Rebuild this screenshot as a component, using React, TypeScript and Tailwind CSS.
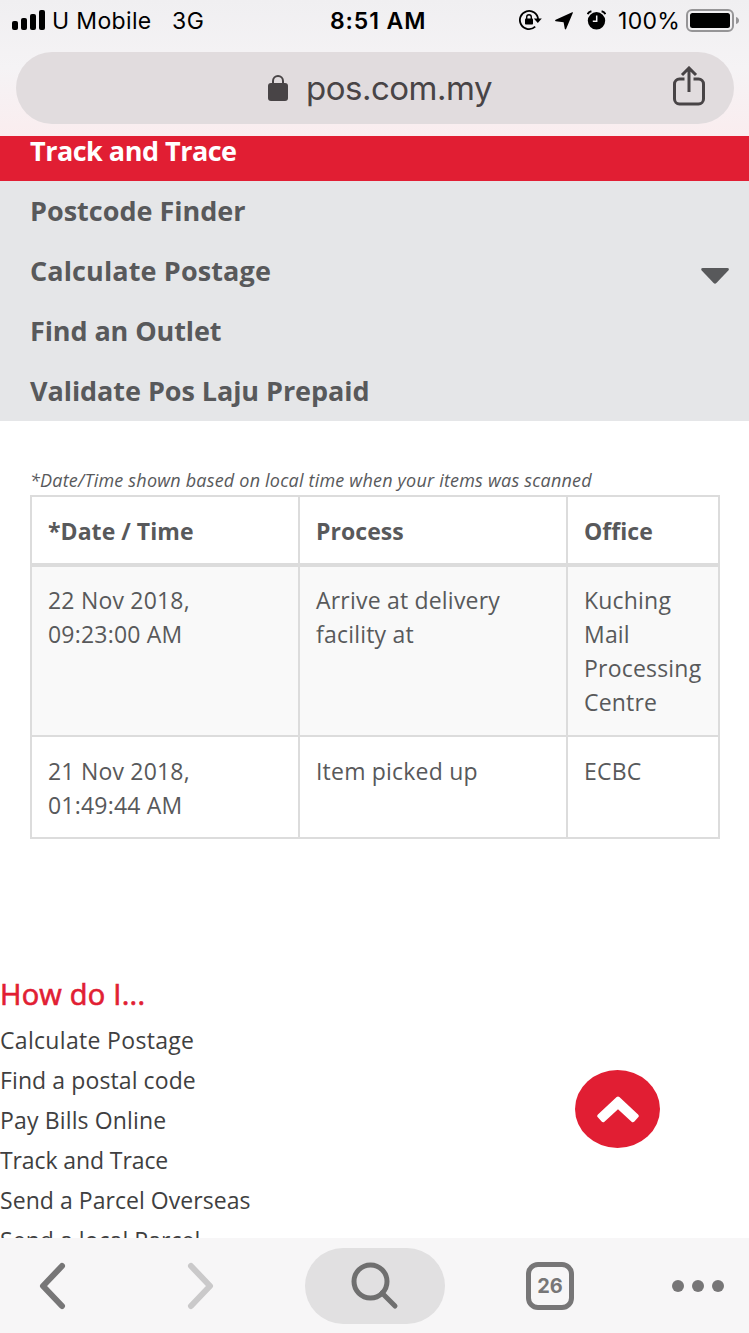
const menuItems = [
  { label: "Postcode Finder", tracking: "tracking-normal", expandable: false },
  { label: "Calculate Postage", tracking: "tracking-[0.12px]", expandable: true },
  { label: "Find an Outlet", tracking: "tracking-[-0.1px]", expandable: false },
  { label: "Validate Pos Laju Prepaid", tracking: "tracking-[-0.06px]", expandable: false },
];

const helpLinks = [
  { label: "Calculate Postage", tracking: "tracking-[0.32px]" },
  { label: "Find a postal code", tracking: "tracking-[0.1px]" },
  { label: "Pay Bills Online", tracking: "tracking-[0.15px]" },
  { label: "Track and Trace", tracking: "tracking-[-0.1px]" },
  { label: "Send a Parcel Overseas", tracking: "tracking-[0.05px]" },
  { label: "Send a local Parcel", tracking: "tracking-[0.05px]" },
];

const StatusBar = () => (
  <div className="flex h-[42px] items-center text-[23px] text-black">
    <svg className="mb-0.5 ml-3 h-5 w-[33px] shrink-0" viewBox="0 0 33 20">
      <rect x="0" y="11" width="6" height="9" rx="2" />
      <rect x="9" y="8" width="6" height="12" rx="2" />
      <rect x="18" y="4" width="6" height="16" rx="2" />
      <rect x="27" y="0" width="6" height="20" rx="2" />
    </svg>
    <span className="ml-[7px] w-[120px] whitespace-nowrap tracking-[0.35px]">U Mobile</span>
    <span className="w-[158px] tracking-[0.5px]">3G</span>
    <span className="w-[189px] whitespace-nowrap font-semibold tracking-[0.9px]">8:51 AM</span>
    <svg className="mb-0.5 h-[22px] w-[24px] shrink-0" viewBox="0 0 24 22">
      <path
        d="M16.200 17.700A9.100 9.100 0 1 1 19.100 10.500"
        fill="none"
        stroke="black"
        strokeWidth="1.800"
      />
      <path d="M14.800 9.600h8l-4 4.500z" />
      <rect x="6" y="9.500" width="8" height="6" rx="0.800" />
      <path d="M7.700 10V8a2.300 2.300 0 0 1 4.600 0v2" fill="none" stroke="black" strokeWidth="1.400" />
    </svg>
    <svg className="mb-px ml-3 h-[18px] w-[18px] shrink-0" viewBox="0 0 18 18">
      <path d="M17.200.3Q18.300 0 17.800 1.100L11.200 16.800q-.8 1.400-1.400-.1L8.600 10.200.8 9.300Q-.6 8.600.7 7.700Z" />
    </svg>
    <svg className="mb-0.5 ml-3.5 h-5 w-[19px] shrink-0" viewBox="0 0 19 20">
      <circle cx="9.500" cy="10.800" r="8.700" />
      <path d="M9.700 5.500v5.800H5.800" fill="none" stroke="#f2f1f3" strokeWidth="1.500" />
      <path d="M.8 4.200Q1.300 1.900 4.400 1.200M18.200 4.200Q17.700 1.900 14.600 1.200" fill="none" stroke="black" strokeWidth="2" />
    </svg>
    <span className="ml-3 w-[68px] whitespace-nowrap tracking-[0.3px]">100%</span>
    <svg className="h-6 w-[54px] shrink-0" viewBox="0 0 54 24">
      <rect x="1" y="1" width="46" height="21" rx="5" fill="none" stroke="#969597" strokeWidth="2" />
      <rect x="4" y="4" width="40" height="15" rx="2.500" />
      <path d="M50 8q3 1 3 3.500t-3 3.500z" fill="#969597" />
    </svg>
  </div>
);

const AddressBar = () => (
  <div className="mt-2.5 mr-[15px] ml-4 flex h-[72px] items-center rounded-full bg-[#e1dcde] text-[#484446]">
    <svg className="ml-[252px] h-[26px] w-5 shrink-0" viewBox="0 0 20 26">
      <rect x="0" y="8" width="20" height="18" rx="3" fill="currentColor" />
      <path d="M5 9V6a5 5 0 0 1 10 0v3" fill="none" stroke="currentColor" strokeWidth="2" />
    </svg>
    <span className="mt-0.5 ml-[18px] w-[367px] text-[33px] tracking-[-0.5px]">pos.com.my</span>
    <svg className="mb-1 h-10 w-8 shrink-0" viewBox="0 0 32 40" fill="none" stroke="currentColor" strokeWidth="3">
      <path d="M11.500 13H6.500a5 5 0 0 0-5 5v15a5 5 0 0 0 5 5h19a5 5 0 0 0 5-5V18a5 5 0 0 0-5-5h-5" />
      <path d="M16 26V2.500M9 9l7-7 7 7" />
    </svg>
  </div>
);

const SiteMenu = () => (
  <nav className="text-[27px] font-bold text-[#58595b]">
    <div className="flex h-[45px] items-start bg-[#e11e33] px-[30px] text-white">
      <span className="leading-[30px] tracking-[-0.5px]">Track and Trace</span>
    </div>
    <div className="bg-[#e5e6e8]">
      {menuItems.map((item) => (
        <div key={item.label} className="flex h-[60px] items-center justify-between pr-5 pl-[30px]">
          <span className={item.tracking}>{item.label}</span>
          {item.expandable && (
            <svg className="mt-2.5 h-4 w-[28px]" viewBox="0 0 28 16">
              <path d="M1.500 0h25q2.500.5.8 2.400L15.400 15q-1.400 1.400-2.800 0L.7 2.400Q-.8.500 1.500 0Z" fill="#58595b" />
            </svg>
          )}
        </div>
      ))}
    </div>
  </nav>
);

const TrackingTable = () => (
  <section className="px-[30px] pt-[47px] text-[#58595b]">
    <p className="h-[27px] whitespace-nowrap text-[18px] leading-[24px] tracking-[0.2px] italic">
      *Date/Time shown based on local time when your items was scanned
    </p>
    <table className="w-[690px] table-fixed border-separate border-spacing-0 border-t-2 border-l-2 border-[#dcdcdc] text-left text-[23px] leading-[34px] tracking-[0.2px]">
      <colgroup>
        <col className="w-[268px]" />
        <col className="w-[268px]" />
        <col className="w-[152px]" />
      </colgroup>
      <thead className="tracking-[0.05px]">
        <tr>
          {["*Date / Time", "Process", "Office"].map((heading) => (
            <th
              key={heading}
              className="border-r-2 border-b-4 border-[#dcdcdc] px-4 pt-[17px] pb-[15px] font-bold"
            >
              {heading}
            </th>
          ))}
        </tr>
      </thead>
      <tbody className="align-top">
        <tr className="h-[170px] bg-[#f9f9f9]">
          <Cell lines={["22 Nov 2018,", "09:23:00 AM"]} />
          <Cell lines={["Arrive at delivery", "facility at"]} />
          <Cell lines={["Kuching", "Mail", "Processing", "Centre"]} />
        </tr>
        <tr className="h-[102px]">
          <Cell lines={["21 Nov 2018,", "01:49:44 AM"]} className="pt-[17px]" />
          <Cell lines={["Item picked up"]} className="pt-[17px]" />
          <Cell lines={["ECBC"]} className="pt-[17px]" />
        </tr>
      </tbody>
    </table>
  </section>
);

const Cell = ({ lines, className = "pt-4" }: { lines: string[]; className?: string }) => (
  <td className={`${className} border-r-2 border-b-2 border-[#dcdcdc] px-4`}>
    {lines.map((line) => (
      <div key={line} className="whitespace-nowrap">
        {line}
      </div>
    ))}
  </td>
);

const HelpLinks = () => (
  <section className="mt-[135px] text-[#3f3f41]">
    <h2 className="h-[46px] text-[29px] leading-[40px] font-medium tracking-[0.25px] text-[#e11e33] [-webkit-text-stroke:0.7px_#e11e33]">
      How do I...
    </h2>
    <ul className="text-[23px] leading-[40px]">
      {helpLinks.map((link) => (
        <li key={link.label} className={link.tracking}>
          {link.label}
        </li>
      ))}
    </ul>
  </section>
);

const Toolbar = () => (
  <footer className="flex h-[95px] shrink-0 items-center bg-[#f7f6f7] text-[#777677]">
    <svg className="ml-[39px] h-[48px] w-[28px]" viewBox="0 0 28 48" fill="none" stroke="currentColor" strokeWidth="6" strokeLinecap="round" strokeLinejoin="round">
      <path d="M23 4 4 24l19 20" />
    </svg>
    <svg className="ml-[119px] h-[48px] w-[28px] text-[#cac9ca]" viewBox="0 0 28 48" fill="none" stroke="currentColor" strokeWidth="6" strokeLinecap="round" strokeLinejoin="round">
      <path d="m5 4 19 20L5 44" />
    </svg>
    <div className="ml-[91px] flex h-[76px] w-[140px] items-center justify-center rounded-full bg-[#e1e0e1]">
      <svg className="h-[48px] w-[48px]" viewBox="0 0 48 48" fill="none" stroke="#6f6f6f" strokeWidth="5">
        <circle cx="19.500" cy="19.500" r="16.500" />
        <path d="m31 31 13 13" strokeLinecap="round" />
      </svg>
    </div>
    <div className="ml-[81px] flex size-12 items-center justify-center rounded-[12px] border-[5px] border-current pt-px text-[20px] font-bold">
      26
    </div>
    <div className="ml-[98px] flex gap-2">
      <span className="size-3 rounded-full bg-current" />
      <span className="size-3 rounded-full bg-current" />
      <span className="size-3 rounded-full bg-current" />
    </div>
  </footer>
);

export default function App() {
  return (
    <div className="flex h-[1333px] w-[749px] flex-col overflow-hidden bg-white font-['Inter',sans-serif]">
      <header className="h-[136px] shrink-0 bg-linear-to-b from-[#f0eff1] via-[#f5f3f5] to-[#faedef]">
        <StatusBar />
        <AddressBar />
      </header>
      <main className="relative h-[1102px] shrink-0 overflow-hidden font-['Open_Sans','Noto_Sans',sans-serif]">
        <SiteMenu />
        <TrackingTable />
        <HelpLinks />
        <button className="absolute top-[934px] left-[575px] flex h-[78px] w-[85px] items-center justify-center rounded-[50%] bg-[#e11e33]">
          <svg className="h-[28px] w-[44px]" viewBox="0 0 44 28">
            <path
              d="M22 3.500 3.300 21l3.800 4.200L22 11.500l14.900 13.700 3.800-4.200Z"
              fill="white"
              stroke="white"
              strokeWidth="4"
              strokeLinejoin="round"
            />
          </svg>
        </button>
      </main>
      <Toolbar />
    </div>
  );
}
